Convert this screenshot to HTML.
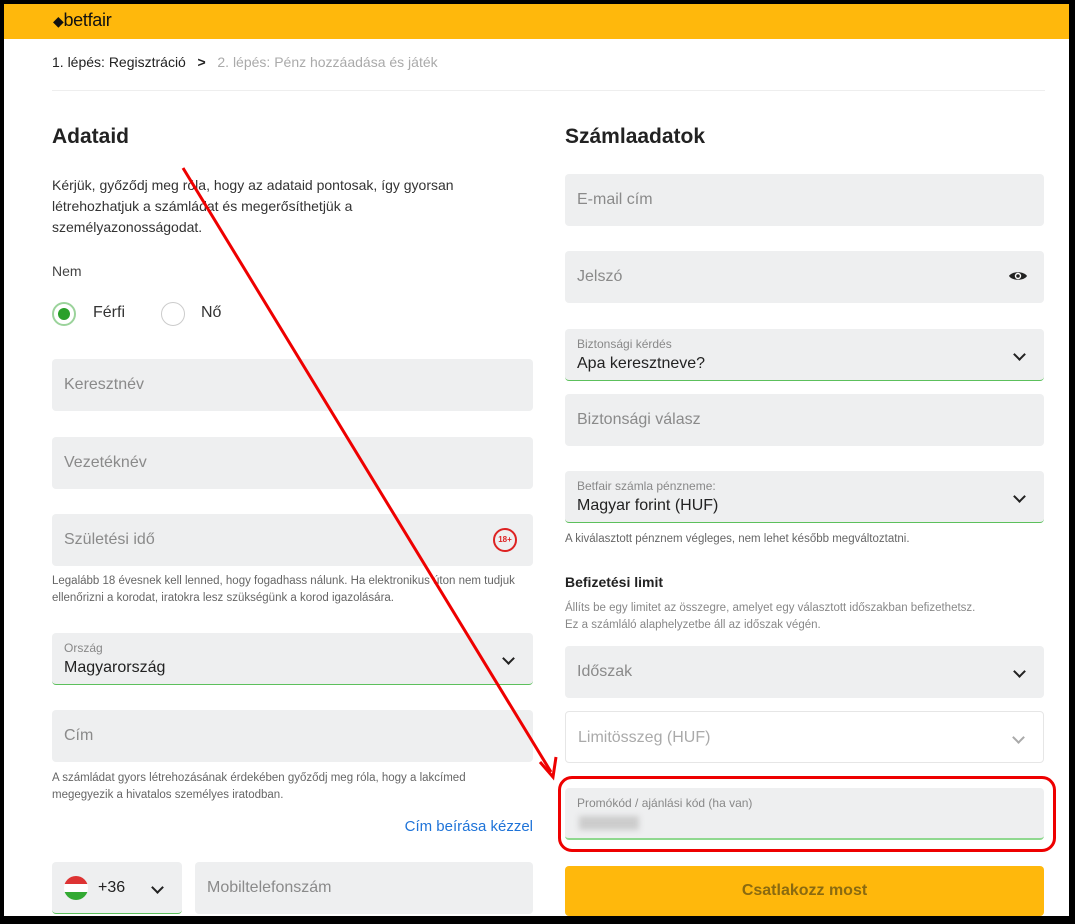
<!DOCTYPE html><html><head><meta charset="utf-8"><style>
body{margin:0;width:1075px;height:924px;background:#000;font-family:"Liberation Sans",sans-serif;position:relative;overflow:hidden}
.pg{position:absolute;left:4px;top:4px;width:1065px;height:912px;background:#fff;overflow:hidden}
.a{position:absolute}
.f{position:absolute;background:#eeeff0;border-radius:4px;box-sizing:border-box;height:52px;color:#8a8a8a;font-size:16px;padding:0 12px;line-height:52px}
.lab{font-size:12px;color:#888;line-height:14px;position:absolute;left:12px;top:8px}
.val{font-size:16px;color:#222;line-height:18px;position:absolute;left:12px;top:26px}
.g{border-bottom:1px solid #5cc05c}
.ch{position:absolute;right:20px;top:21px;width:7px;height:7px;border-right:2px solid #222;border-bottom:2px solid #222;transform:rotate(45deg)}
.s{font-size:11.5px;color:#666;line-height:17px}
</style></head><body><div class="pg">
<div class="a" style="left:0;top:0;width:1065px;height:35px;background:#ffb80c"></div>
<div class="a" style="left:49px;top:6px;font-size:18px;color:#111;letter-spacing:-0.3px"><span style="font-size:14px">◆</span>betfair</div>
<div class="a" style="left:48px;top:50px;font-size:14px;color:#222">1. lépés: Regisztráció &nbsp; <b>&gt;</b> &nbsp; <span style="color:#aaa">2. lépés: Pénz hozzáadása és játék</span></div>
<div class="a" style="left:48px;top:86px;width:993px;height:1px;background:#eee"></div>
<div class="a" style="left:48px;top:121px;font-size:21px;font-weight:bold;color:#222">Adataid</div>
<div class="a" style="left:561px;top:121px;font-size:21px;font-weight:bold;color:#222">Számlaadatok</div>
<div class="a" style="left:48px;top:171px;font-size:14px;line-height:21px;color:#333;width:445px">Kérjük, győződj meg róla, hogy az adataid pontosak, így gyorsan létrehozhatjuk a számládat és megerősíthetjük a személyazonosságodat.</div>
<div class="a" style="left:48px;top:259px;font-size:14px;color:#444">Nem</div>
<div class="a" style="left:48px;top:298px;width:24px;height:24px;border:2px solid #9bd39b;border-radius:50%;box-sizing:border-box"><div style="margin:4px;width:12px;height:12px;border-radius:50%;background:#2aa02a"></div></div>
<div class="a" style="left:89px;top:300px;font-size:16px;color:#333">Férfi</div>
<div class="a" style="left:157px;top:298px;width:24px;height:24px;border:1px solid #ccc;border-radius:50%;box-sizing:border-box"></div>
<div class="a" style="left:197px;top:300px;font-size:16px;color:#333">Nő</div>
<div class="f" style="left:48px;top:355px;width:481px">Keresztnév</div>
<div class="f" style="left:48px;top:433px;width:481px">Vezetéknév</div>
<div class="f" style="left:48px;top:510px;width:481px">Születési idő<div class="a" style="right:16px;top:14px;width:24px;height:24px;border:2px solid #d22;border-radius:50%;box-sizing:border-box;font-size:8px;line-height:20px;text-align:center;color:#d22;font-weight:bold">18+</div></div>
<div class="a s" style="left:48px;top:569px;width:470px">Legalább 18 évesnek kell lenned, hogy fogadhass nálunk. Ha elektronikus úton nem tudjuk ellenőrizni a korodat, iratokra lesz szükségünk a korod igazolására.</div>
<div class="f g" style="left:48px;top:629px;width:481px"><div class="lab">Ország</div><div class="val">Magyarország</div><div class="ch"></div></div>
<div class="f" style="left:48px;top:706px;width:481px">Cím</div>
<div class="a s" style="left:48px;top:766px;width:460px">A számládat gyors létrehozásának érdekében győződj meg róla, hogy a lakcímed megegyezik a hivatalos személyes iratodban.</div>
<div class="a" style="right:536px;top:814px;font-size:15px;color:#1e73d8">Cím beírása kézzel</div>
<div class="f g" style="left:48px;top:858px;width:130px"><div class="a" style="left:12px;top:14px;width:24px;height:24px;border-radius:50%;background:linear-gradient(#d33 33%,#fff 33%,#fff 66%,#3a3 66%)"></div><span style="position:absolute;left:46px;color:#222">+36</span><div class="ch" style="right:20px"></div></div>
<div class="f" style="left:191px;top:858px;width:338px">Mobiltelefonszám</div>

<div class="f" style="left:561px;top:170px;width:479px">E-mail cím</div>
<div class="f" style="left:561px;top:247px;width:479px">Jelszó<svg class="a" style="right:16px;top:18px" width="20" height="14" viewBox="0 0 20 14"><path d="M1 7C4 2 16 2 19 7C16 12 4 12 1 7Z" fill="#222"/><circle cx="10" cy="7" r="3.2" fill="#fff"/><circle cx="10" cy="7" r="1.8" fill="#222"/></svg></div>
<div class="f g" style="left:561px;top:325px;width:479px"><div class="lab">Biztonsági kérdés</div><div class="val">Apa keresztneve?</div><div class="ch"></div></div>
<div class="f" style="left:561px;top:390px;width:479px">Biztonsági válasz</div>
<div class="f g" style="left:561px;top:467px;width:479px"><div class="lab">Betfair számla pénzneme:</div><div class="val">Magyar forint (HUF)</div><div class="ch"></div></div>
<div class="a s" style="left:561px;top:527px">A kiválasztott pénznem végleges, nem lehet később megváltoztatni.</div>
<div class="a" style="left:561px;top:570px;font-size:14px;font-weight:bold;color:#222">Befizetési limit</div>
<div class="a s" style="left:561px;top:596px;color:#888">Állíts be egy limitet az összegre, amelyet egy választott időszakban befizethetsz.<br>Ez a számláló alaphelyzetbe áll az időszak végén.</div>
<div class="f" style="left:561px;top:642px;width:479px">Időszak<div class="ch"></div></div>
<div class="f" style="left:561px;top:707px;width:479px;background:#fff;border:1px solid #e6e6e6;color:#aaa">Limitösszeg (HUF)<div class="ch" style="border-color:#aaa"></div></div>
<div class="f g" style="left:561px;top:784px;width:479px;border-bottom:2px solid #8fd88f"><div class="lab">Promókód / ajánlási kód (ha van)</div><div class="a" style="left:14px;top:28px;width:60px;height:14px;background:#ccc;filter:blur(3px)"></div></div>
<div class="a" style="left:561px;top:862px;width:479px;height:50px;background:#ffb80c;border-radius:4px;text-align:center;line-height:50px;font-size:16px;font-weight:bold;color:#8a6a10">Csatlakozz most</div>
<div class="a" style="left:554px;top:772px;width:492px;height:70px;border:3px solid #e00;border-radius:14px"></div>
<svg class="a" style="left:0;top:0" width="1065" height="912"><line x1="179" y1="164" x2="547" y2="768" stroke="#e00" stroke-width="3"/><path d="M536 758 L549 773 L552 753" fill="none" stroke="#e00" stroke-width="3"/></svg>
</div></body></html>
